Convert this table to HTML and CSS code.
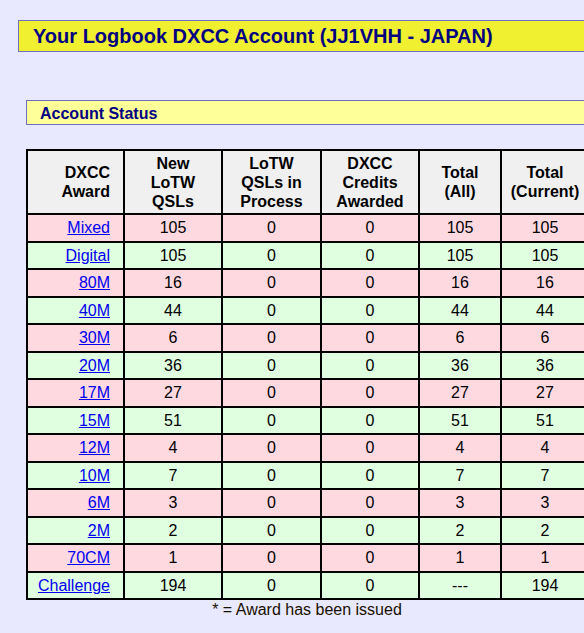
FILE: index.html
```html
<!DOCTYPE html>
<html>
<head>
<meta charset="utf-8">
<link rel="stylesheet" href="styles.css">
</head>
<body>
<div class="page">
  <h1 class="title">Your Logbook DXCC Account (JJ1VHH - JAPAN)</h1>
  <div class="section">
    <h2 class="subtitle">Account Status</h2>
    <div class="tablewrap">
      <table class="status">
        <colgroup>
          <col class="c1"><col class="c2"><col class="c3"><col class="c4"><col class="c5"><col class="c6">
        </colgroup>
        <thead>
          <tr>
            <th class="award">DXCC<br>Award</th>
            <th>New<br>LoTW<br>QSLs</th>
            <th>LoTW<br>QSLs in<br>Process</th>
            <th>DXCC<br>Credits<br>Awarded</th>
            <th>Total<br>(All)</th>
            <th>Total<br>(Current)</th>
          </tr>
        </thead>
        <tbody>
          <tr class="pink"><td class="award"><a href="#">Mixed</a></td><td>105</td><td>0</td><td>0</td><td>105</td><td>105</td></tr>
          <tr class="green"><td class="award"><a href="#">Digital</a></td><td>105</td><td>0</td><td>0</td><td>105</td><td>105</td></tr>
          <tr class="pink"><td class="award"><a href="#">80M</a></td><td>16</td><td>0</td><td>0</td><td>16</td><td>16</td></tr>
          <tr class="green"><td class="award"><a href="#">40M</a></td><td>44</td><td>0</td><td>0</td><td>44</td><td>44</td></tr>
          <tr class="pink"><td class="award"><a href="#">30M</a></td><td>6</td><td>0</td><td>0</td><td>6</td><td>6</td></tr>
          <tr class="green"><td class="award"><a href="#">20M</a></td><td>36</td><td>0</td><td>0</td><td>36</td><td>36</td></tr>
          <tr class="pink"><td class="award"><a href="#">17M</a></td><td>27</td><td>0</td><td>0</td><td>27</td><td>27</td></tr>
          <tr class="green"><td class="award"><a href="#">15M</a></td><td>51</td><td>0</td><td>0</td><td>51</td><td>51</td></tr>
          <tr class="pink"><td class="award"><a href="#">12M</a></td><td>4</td><td>0</td><td>0</td><td>4</td><td>4</td></tr>
          <tr class="green"><td class="award"><a href="#">10M</a></td><td>7</td><td>0</td><td>0</td><td>7</td><td>7</td></tr>
          <tr class="pink"><td class="award"><a href="#">6M</a></td><td>3</td><td>0</td><td>0</td><td>3</td><td>3</td></tr>
          <tr class="green"><td class="award"><a href="#">2M</a></td><td>2</td><td>0</td><td>0</td><td>2</td><td>2</td></tr>
          <tr class="pink"><td class="award"><a href="#">70CM</a></td><td>1</td><td>0</td><td>0</td><td>1</td><td>1</td></tr>
          <tr class="green"><td class="award"><a href="#">Challenge</a></td><td>194</td><td>0</td><td>0</td><td>---</td><td>194</td></tr>
        </tbody>
      </table>
      <p class="note">* = Award has been issued</p>
    </div>
  </div>
</div>
</body>
</html>
```

FILE: styles.css
```css
html {
  overflow: hidden;
}
body {
  margin: 0;
  background: #e8e8ff;
  font-family: "Liberation Sans", Arial, sans-serif;
  color: #000;
}
.page {
  padding: 20px 0 0 18px;
  width: 620px;
}
.title {
  margin: 0;
  height: 30px;
  line-height: 30px;
  padding-left: 14px;
  background: #f0f030;
  border: 1px solid #7070c0;
  color: #000080;
  font-size: 20px;
  font-weight: bold;
}
.section {
  margin: 48px 0 0 8px;
}
.subtitle {
  margin: 0;
  height: 23px;
  line-height: 26px;
  padding-left: 13px;
  background: #ffff99;
  border: 1px solid #7070c0;
  color: #000080;
  font-size: 16px;
  font-weight: bold;
}
.tablewrap {
  width: 562px;
  margin-top: 24px;
}
.status {
  width: 562px;
  border-collapse: collapse;
  table-layout: fixed;
  font-size: 16px;
}
.c1 { width: 97px; }
.c2 { width: 98px; }
.c3 { width: 99px; }
.c4 { width: 98px; }
.c5 { width: 82px; }
.c6 { width: 88px; }
.status th,
.status td {
  border: 2px solid #000;
  text-align: center;
}
.status th {
  background: #f0f0f0;
  font-weight: bold;
  line-height: 19px;
  padding: 2.5px 4px;
  vertical-align: middle;
}
.status td {
  line-height: 18px;
  padding: 4px 4px 3.5px;
}
.status .award {
  text-align: right;
  padding-right: 13px;
}
.pink td {
  background: #ffd9e0;
}
.green td {
  background: #e0ffe0;
}
.status a {
  color: #0000ee;
  text-decoration: underline;
}
.note {
  margin: 0;
  text-align: center;
  font-size: 16px;
  line-height: 20px;
  color: #1a1000;
}
```
